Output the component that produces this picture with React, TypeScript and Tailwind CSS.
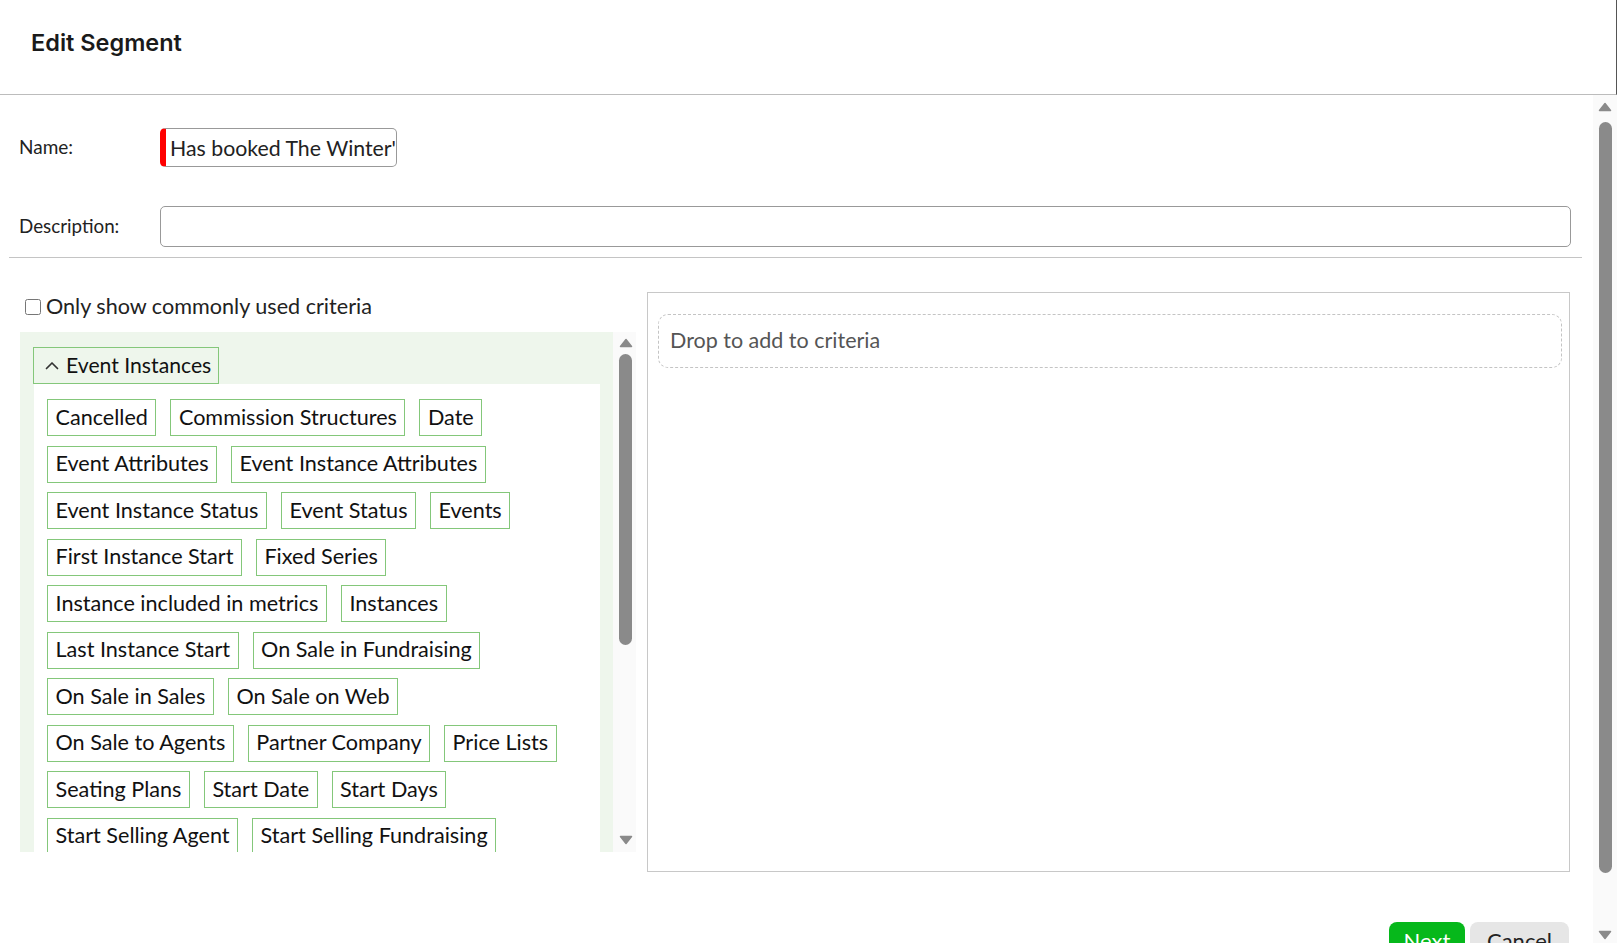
const TAG_ROWS = [
  ['Cancelled', 'Commission Structures', 'Date'],
  ['Event Attributes', 'Event Instance Attributes'],
  ['Event Instance Status', 'Event Status', 'Events'],
  ['First Instance Start', 'Fixed Series'],
  ['Instance included in metrics', 'Instances'],
  ['Last Instance Start', 'On Sale in Fundraising'],
  ['On Sale in Sales', 'On Sale on Web'],
  ['On Sale to Agents', 'Partner Company', 'Price Lists'],
  ['Seating Plans', 'Start Date', 'Start Days'],
  ['Start Selling Agent', 'Start Selling Fundraising'],
  ['Start Selling Sales', 'Start Selling Web'],
];

function Arrow({ down = false }: { down?: boolean }) {
  return (
    <svg width="14" height="10" viewBox="0 0 14 10" className="block">
      {down ? (
        <path d="M1.5 1.5 H12.5 L7 8.5 Z" fill="#8a8a8a" stroke="#8a8a8a" strokeWidth="1.5" strokeLinejoin="round" />
      ) : (
        <path d="M1.5 8.5 H12.5 L7 1.5 Z" fill="#8a8a8a" stroke="#8a8a8a" strokeWidth="1.5" strokeLinejoin="round" />
      )}
    </svg>
  );
}

function Tag({ label }: { label: string }) {
  return (
    <div className="h-[37px] flex items-center px-[7.5px] border border-[#84c77a] bg-white text-[21.6px] leading-none text-[#111] whitespace-nowrap">
      {label}
    </div>
  );
}

export default function App() {
  return (
    <div className="w-full h-[943px] overflow-hidden bg-white flex flex-col font-['Lato',sans-serif] text-[#222]">
      {/* Header */}
      <div className="h-[95px] shrink-0 border-b border-[#bcbcbc] border-r border-r-[#555] pl-[31px] pt-[29px]">
        <h1 className="font-['Inter',sans-serif] font-semibold text-[23.5px] leading-[28px] text-[#1a1a1a]">Edit Segment</h1>
      </div>

      {/* Body */}
      <div className="flex flex-1 min-h-0">
        <div className="flex-1 min-w-0 overflow-hidden">
          {/* Name */}
          <div className="flex items-center mt-[33px] h-[39px]">
            <label className="w-[160px] pl-[19px] text-[19px]">Name:</label>
            <input
              readOnly
              value="Has booked The Winter's Tale"
              className="w-[237px] h-[39px] border border-[#999] border-l-[6px] border-l-[#ff0000] rounded-[5px] pl-[4px] text-[21.3px] text-[#222] outline-none"
            />
          </div>

          {/* Description */}
          <div className="flex items-center mt-[39px] h-[41px]">
            <label className="w-[160px] pl-[19px] text-[18.8px]">Description:</label>
            <input readOnly className="w-[1411px] h-[41px] border border-[#999] rounded-[5px] outline-none" />
          </div>

          <div className="mt-[10px] ml-[9px] w-[1573px] h-px bg-[#c4c4c4]" />

          {/* Criteria area */}
          <div className="flex mt-[34px]">
            {/* Left column */}
            <div className="ml-[20px] w-[616px] flex flex-col">
              <div className="mt-[1px] h-[28px] flex items-center ml-[5px] gap-[5px]">
                <input type="checkbox" className="w-[16px] h-[16px] m-0" />
                <span className="text-[21.6px] leading-none text-[#222]">Only show commonly used criteria</span>
              </div>

              <div className="mt-[11px] h-[520px] flex">
                <div className="w-[593px] bg-[#eef6ec] overflow-hidden pt-[15px] px-[13px]">
                  <div className="inline-flex items-center h-[37px] border border-[#84c77a] pl-[11px] pr-[7px] gap-[7px]">
                    <svg width="14" height="9" viewBox="0 0 14 9" className="block">
                      <path d="M1.5 7.5 L7 2 L12.5 7.5" fill="none" stroke="#333" strokeWidth="1.7" strokeLinecap="round" strokeLinejoin="round" />
                    </svg>
                    <span className="text-[21.2px] leading-none text-[#111]">Event Instances</span>
                  </div>
                  <div className="bg-white ml-px pt-[15px] pl-[13px] flex flex-col gap-y-[9.5px]">
                    {TAG_ROWS.map((row, i) => (
                      <div key={i} className="flex gap-x-[14px]">
                        {row.map((t) => (
                          <Tag key={t} label={t} />
                        ))}
                      </div>
                    ))}
                  </div>
                </div>
                {/* Inner scrollbar */}
                <div className="w-[23px] bg-[#fafafa] flex flex-col items-center pl-[2px]">
                  <div className="mt-[6px]">
                    <Arrow />
                  </div>
                  <div className="mt-[6px] w-[13px] h-[291px] rounded-full bg-[#8a8a8a]" />
                  <div className="mt-auto mb-[7px]">
                    <Arrow down />
                  </div>
                </div>
              </div>
            </div>

            {/* Right box */}
            <div className="ml-[11px] w-[923px] h-[580px] border border-[#c8c8c8] pt-[21px] pl-[10px] pr-[7px]">
              <div className="h-[54px] border border-dashed border-[#c4c4c4] rounded-[10px] flex items-center pl-[11px]">
                <span className="text-[21.5px] leading-none text-[#555]">Drop to add to criteria</span>
              </div>
            </div>
          </div>

          {/* Buttons */}
          <div className="mt-[50px] flex justify-end pr-[24px] gap-[5px]">
            <button className="w-[76px] h-[44px] rounded-t-[8px] bg-[#06b81b] text-white text-[22px] leading-[26px] flex justify-center pt-[6px]">
              Next
            </button>
            <button className="w-[99px] h-[44px] rounded-t-[8px] bg-[#e6e6e6] text-[#222] text-[22px] leading-[26px] flex justify-center pt-[6px]">
              Cancel
            </button>
          </div>
        </div>

        {/* Page scrollbar */}
        <div className="w-[24px] shrink-0 bg-[#fafafa] flex flex-col items-center">
          <div className="mt-[7px]">
            <Arrow />
          </div>
          <div className="mt-[10px] w-[13px] h-[751px] rounded-full bg-[#8a8a8a]" />
          <div className="mt-auto mb-[3px]">
            <Arrow down />
          </div>
        </div>
      </div>
    </div>
  );
}
